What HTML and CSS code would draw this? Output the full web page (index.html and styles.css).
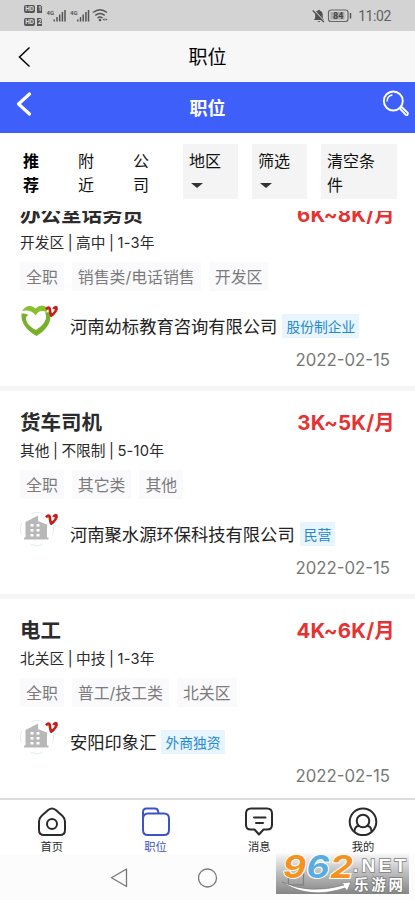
FILE: index.html
```html
<!DOCTYPE html>
<html lang="zh-CN">
<head>
<meta charset="utf-8">
<title>职位</title>
<link rel="stylesheet" href="styles.css">
</head>
<body>
<svg class="defs" width="0" height="0" aria-hidden="true">
  <symbol id="verified" viewBox="0 0 14 14"><path d="M1 4.200Q3 2.200 4.200 2.800C5.400 4 4.700 8.500 6.200 10.700 8.500 9 11.500 5.500 11.600 3.300 11.500 1.500 9.500 2 8.500 4" fill="none" stroke="#c51f17" stroke-width="2.700" stroke-linejoin="round"/></symbol>
  <symbol id="building" viewBox="0 0 34 34"><circle cx="17" cy="17" r="16.500" fill="#fff" stroke="#e1eef1" stroke-dasharray="12 14" stroke-dashoffset="6"/><path d="M4 27.500v-2h1.500V10L18 3.500V9l9 3.500v13h1.500v2z" fill="#b8b8b8"/><path d="M10.500 12h3v2.500h-3zm6 0h3v2.500h-3zm-6 5h3v2.500h-3zm6 0h3v2.500h-3zm-6 5h3v2.500h-3zm6 0h3v2.500h-3z" fill="#fff"/></symbol>
</svg>
<div class="screen">
  <div class="status">
    <svg width="110" height="31" viewBox="0 0 110 31">
      <g fill="#555"><rect x="24" y="5" width="11" height="8" rx="2"/><path d="M37 5h3.500L42 6.500V13h-5zM37 18h3.500l1.500 1.500V26h-5z"/><rect x="24" y="18" width="11" height="8" rx="2"/></g>
      <g class="sim"><text x="25.200" y="11.400">HD</text><text x="38" y="11.400">1</text><text x="25.200" y="24.400">HD</text><text x="38" y="24.400">2</text></g>
      <g class="net"><text x="46.500" y="15">4G</text><text x="70" y="15">4G</text></g>
      <path d="M54.300 21.500v-2M57 21.500V17M59.700 21.500V14.500M62.400 21.500V12M65 21.500V10M77.800 21.500v-2M80.500 21.500V17M83.200 21.500V14.500M85.900 21.500V12M88.500 21.500V10" stroke="#555" stroke-width="1.500"/>
      <g fill="none" stroke="#555" stroke-width="1.500"><path d="M93 12.500q7-5.500 14 0M95.300 15.300q4.700-3.500 9.400 0M97.500 18q2.500-1.800 5 0"/></g><circle cx="100" cy="20" r="1.300" fill="#555"/><path d="M102.500 19.500l2-1.300v2.600zM107.500 19.500l-2-1.300v2.600z" fill="#555"/>
    </svg>
    <div class="status-right">
      <svg width="41" height="16" viewBox="0 0 41 16"><path d="M2 12h10l-1.300-2.200V6.300Q10.500 3.200 8 2.700 7.500.8 6 2.600 3.200 3.400 3.200 6.500v3.200zM5.500 13h3q-1.500 2-3 0z" fill="#505050"/><path d="M1.800 1.800l11 12" stroke="#d3d3d3" stroke-width="1.200"/><path d="M.8 2.500l11 11.500" stroke="#505050" stroke-width="1.300"/><rect x="16.500" y="2" width="19.500" height="11.500" rx="2.500" fill="none" stroke="#666" stroke-width="1.200"/><rect x="18.500" y="4" width="14" height="7.500" fill="#aaa"/><text x="21" y="11" class="battery">84</text><path d="M38.500 5v5.500" stroke="#555" stroke-width="1.500"/></svg>
      <span class="clock">11:02</span>
    </div>
  </div>
  <header class="bar bar-light">
    <svg class="back" width="20" height="24" viewBox="0 0 20 24"><path d="M14.500 2.500L4.500 12l10 9.500" fill="none" stroke="#000" stroke-width="1.500"/></svg>
    <span>职位</span>
  </header>
  <header class="bar bar-blue">
    <svg class="back-bold" width="20" height="26" viewBox="0 0 20 26"><path d="M15.500 3L4.500 13l11 10" fill="none" stroke="#fff" stroke-width="3.200" stroke-linecap="round" stroke-linejoin="round"/></svg>
    <span>职位</span>
    <svg class="search" width="28" height="28" viewBox="0 0 28 28" fill="none" stroke="#fff"><circle cx="11.300" cy="11" r="9.500" stroke-width="1.900"/><path d="M5 11Q5.500 6 10 5" stroke-width="1.300" stroke-linecap="round"/><path d="M17.500 18.200l6.300 6.700q2.300.8 2-2L19.700 17z" stroke-width="1.900" stroke-linejoin="round"/></svg>
  </header>
  <nav class="filters">
    <span class="tab active">推荐</span><span class="tab">附近</span><span class="tab">公司</span>
    <div class="drop">地区<i></i></div><div class="drop">筛选<i></i></div><div class="drop clear">清空条件</div>
  </nav>
  <main class="list">
    <article class="job">
      <div class="head"><h2>办公室话务员</h2><b class="pay">6K~8K/月</b></div>
      <div class="meta"><span>开发区</span><i>|</i><span>高中</span><i>|</i><span>1-3年</span></div>
      <div class="tags"><span>全职</span><span>销售类/电话销售</span><span>开发区</span></div>
      <div class="company">
        <svg class="logo" width="40" height="36" viewBox="0 0 40 36"><path d="M2 7Q8-1.500 15.500 4.500 22-1.500 28 4.500L26.500 8Q19 5 15.800 11.500 11 5 2 7z" fill="#8abf30"/><path d="M1.500 9.500Q6 9 8.500 11q-3 1-2.500 4.500Q7.500 22 16 26 24 21 26 14.500 26.500 11 25 8.500l5-.5Q33 22 16.500 32 .5 23 1.500 9.500z" fill="#78b02c"/><use href="#verified" x="25" y="1" width="14" height="14"/></svg>
        <span class="name">河南幼标教育咨询有限公司</span><span class="kind">股份制企业</span>
      </div>
      <time>2022-02-15</time>
    </article>
    <article class="job">
      <div class="head"><h2>货车司机</h2><b class="pay">3K~5K/月</b></div>
      <div class="meta"><span>其他</span><i>|</i><span>不限制</span><i>|</i><span>5-10年</span></div>
      <div class="tags"><span>全职</span><span>其它类</span><span>其他</span></div>
      <div class="company">
        <svg class="logo" width="40" height="36" viewBox="0 0 40 36"><use href="#building" x="0" y="0" width="34" height="34"/><use href="#verified" x="25" y="1" width="14" height="14"/></svg>
        <span class="name">河南聚水源环保科技有限公司</span><span class="kind">民营</span>
      </div>
      <time>2022-02-15</time>
    </article>
    <article class="job">
      <div class="head"><h2>电工</h2><b class="pay">4K~6K/月</b></div>
      <div class="meta"><span>北关区</span><i>|</i><span>中技</span><i>|</i><span>1-3年</span></div>
      <div class="tags"><span>全职</span><span>普工/技工类</span><span>北关区</span></div>
      <div class="company">
        <svg class="logo" width="40" height="36" viewBox="0 0 40 36"><use href="#building" x="0" y="0" width="34" height="34"/><use href="#verified" x="25" y="1" width="14" height="14"/></svg>
        <span class="name">安阳印象汇</span><span class="kind">外商独资</span>
      </div>
      <time>2022-02-15</time>
    </article>
  </main>
  <nav class="tabs">
    <div><svg width="30" height="30" viewBox="0 0 30 30"><path d="M11.500 2.800q3.500-2.600 7 0l6.800 6q2.700 2.500 2.700 6V23q0 5-5 5H7q-5 0-5-5v-8.200q0-3.500 2.700-6z"/><circle cx="15" cy="17" r="5"/></svg>首页</div>
    <div class="on"><svg width="30" height="30" viewBox="0 0 30 30"><path d="M2 12V5q0-3.500 3.500-3.500h8.500Q16.500 1.500 17 4q.2 2.500 2 2.500h4q5 0 5 5V23q0 5-5 5H7q-5 0-5-5V12q0-5.500 5-5.500h12"/></svg>职位</div>
    <div><svg width="30" height="30" viewBox="0 0 30 30"><path d="M7 1.500h16q5 0 5 5V18q0 4.500-5 4.500h-3.500L15 27.500l-4.500-5H7Q2 22.500 2 18V6.500q0-5 5-5zM10 10.500h11.500M12 16h7"/></svg>消息</div>
    <div><svg width="30" height="30" viewBox="0 0 30 30"><circle cx="15" cy="14.800" r="13.300"/><circle cx="15" cy="14" r="6.300"/><path d="M6.500 24q.5-5 4.500-5M23.500 24q-.5-5-4.500-5"/></svg>我的</div>
  </nav>
  <div class="system">
    <svg width="20" height="22" viewBox="0 0 20 22"><path d="M16.500 2v17.500L1.500 10.800z"/></svg>
    <svg width="20" height="22" viewBox="0 0 20 22"><circle cx="9.500" cy="11" r="9"/></svg>
    <svg width="20" height="22" viewBox="0 0 20 22"><path d="M2.500 3h15v15h-15z"/></svg>
  </div>
  <svg class="watermark" width="133" height="42" viewBox="0 0 133 42">
    <defs><linearGradient id="shade" x1="0" y1="0" x2="0" y2="1"><stop offset="0" stop-color="#888" stop-opacity="0"/><stop offset=".5" stop-color="#888" stop-opacity=".55"/><stop offset="1" stop-color="#858585"/></linearGradient></defs>
    <path d="M0 0h133v42H0z" fill="url(#shade)"/>
    <path d="M6 30Q34 43 68 33l-3-2 10-1-4 9-2-3Q33 48 6 30z" fill="#fff" stroke="#777" stroke-width=".6"/>
    <g class="mark-num"><text x="7" y="26" textLength="23" lengthAdjust="spacingAndGlyphs" fill="#f6921e">9</text><text x="30.500" y="26" textLength="23" lengthAdjust="spacingAndGlyphs" fill="#58ace0">6</text><text x="54" y="26" textLength="23" lengthAdjust="spacingAndGlyphs" fill="#f6921e">2</text></g>
    <text class="mark-net" x="77" y="20" textLength="53" lengthAdjust="spacing">.NET</text>
    <text class="mark-cn" x="78" y="38" textLength="49" lengthAdjust="spacing">乐游网</text>
  </svg>
</div>
</body>
</html>
```
FILE: styles.css
```css
* { box-sizing: border-box; }
body { margin: 0; background: #fff; font-family: Inter, "Noto Sans CJK SC", sans-serif; color: #2b2b2b; }
i { font-style: normal; }
svg { display: block; flex: none; }
.defs { position: absolute; }
.screen { position: relative; width: 415px; height: 900px; overflow: hidden; display: flex; flex-direction: column; }
.status { height: 31px; background: #d3d3d3; display: flex; justify-content: space-between; }
.status-right { display: flex; align-items: center; gap: 5px; padding-right: 24px; }
.clock { font: 14px/31px Roboto, sans-serif; color: #606060; letter-spacing: -.4px; padding-top: 1px; }
.net { font: bold 6px Roboto, sans-serif; fill: #555; }
.sim { font: bold 6.5px Roboto, sans-serif; fill: #ddd; }
.battery { font: bold 9px Roboto, sans-serif; fill: #444; }
.bar { height: 51px; display: grid; grid-template-columns: 60px 1fr 60px; align-items: center; text-align: center; font-size: 19px; line-height: 28px; }
.bar-light { background: #f7f7f7; color: #000; }
.bar-light span { margin-top: 3px; }
.bar-blue { background: #3f5ffa; color: #fff; font-size: 18px; font-weight: 700; }
.bar-blue span { margin-top: 3px; }
.back { margin-left: 15px; }
.back-bold { margin: -8px 0 0 14px; }
.search { margin: -8px 0 0 27px; }
.filters { height: 78px; padding: 11px 18px 0 23px; display: flex; align-items: flex-start; font-size: 16px; line-height: 24px; color: #111; }
.tab { width: 16px; margin-right: 39px; padding-top: 5px; flex: none; }
.tab.active { font-weight: 700; color: #000; }
.drop { width: 55px; height: 55px; padding: 5px 6px; margin-right: 14px; background: #f4f4f4; flex: none; }
.tab + .drop { margin-left: -5px; }
.drop i { display: block; width: 0; margin: 10px 0 0 2px; border: 6px solid transparent; border-top: 5.5px solid #333; border-bottom: 0; }
.drop.clear { width: 76px; margin-right: 0; padding-right: 12px; }
.list { height: 587px; overflow: hidden; background: #f5f5f5; }
.job { height: 203px; margin-bottom: 5px; padding: 18px 20px 0; background: #fff; display: flex; flex-direction: column; }
.job:first-child { margin-top: -28px; }
.head { height: 28px; display: flex; justify-content: space-between; line-height: 28px; }
.head h2 { margin: 0; font-size: 20.5px; font-weight: 700; line-height: 28px; }
.pay { color: #e53333; font-size: 20.5px; letter-spacing: .15px; }
.meta { display: flex; height: 20px; margin-top: 4px; font-size: 14.7px; line-height: 20px; }
.meta i { width: 12px; text-align: center; }
.meta span:last-child { letter-spacing: .2px; }
.tags { display: flex; gap: 8px; margin-top: 9px; }
.tags span { height: 29px; padding: 1px 6px 0; background: #fafafc; color: #7b7b7b; font-size: 15.9px; line-height: 29px; }
.company { display: flex; align-items: flex-start; height: 36px; margin-top: 13px; }
.logo { margin-right: 10px; }
.name { font-size: 17.3px; line-height: 26px; padding-top: 10px; color: #222; }
.kind { height: 24px; margin: 10px 0 0 5px; padding: 1px 4px 0; background: #e8f4fe; color: #2589d0; font-size: 13.8px; line-height: 24px; }
time { align-self: flex-end; margin: 9px 5px 0 0; font-size: 16.8px; line-height: 22px; color: #777; }
.tabs { height: 57px; border-top: 2px solid #ddd; display: grid; grid-template-columns: repeat(4, 1fr); font-size: 11.3px; line-height: 16px; text-align: center; }
.tabs div { display: flex; flex-direction: column; align-items: center; padding-top: 7px; }
.tabs svg { fill: none; stroke: #2b2b2b; stroke-width: 2; stroke-linejoin: round; stroke-linecap: round; margin-bottom: 2px; }
.tabs .on { color: #3c52c9; }
.tabs .on svg { stroke: #3c52c9; }
.system { height: 45px; background: #fcfcfc; display: flex; justify-content: center; gap: 68px; padding-top: 12px; }
.system svg { fill: none; stroke: #777; stroke-width: 1.3; stroke-linejoin: round; }
.watermark { position: absolute; left: 276px; top: 852px; }
.mark-num { font: italic bold 31px Inter, sans-serif; stroke: #fff; stroke-width: 2px; paint-order: stroke; }
.mark-net { font: bold 19px "Liberation Sans", sans-serif; fill: #fff; stroke: #808080; stroke-width: 1.5px; paint-order: stroke; }
.mark-cn { font: bold 14.5px "Noto Sans CJK SC", sans-serif; fill: #fff; stroke: #777; stroke-width: 1.5px; paint-order: stroke; }
```
